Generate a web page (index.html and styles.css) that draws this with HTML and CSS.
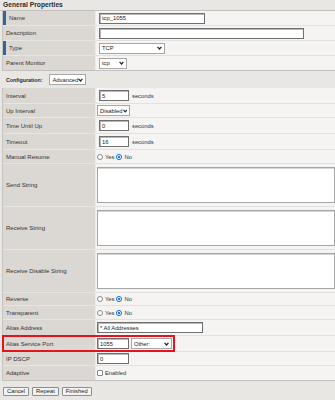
FILE: index.html
```html
<!DOCTYPE html>
<html lang="en">
<head>
    <meta charset="UTF-8">
    <meta name="viewport" content="width=device-width, initial-scale=1.0">
    <title>Monitor Properties</title>
    <link rel="stylesheet" href="styles.css">
</head>
<body>
    <div class="section-title">General Properties</div>

    <div class="props props-general">
        <div class="row">
            <div class="label required">Name</div>
            <div class="value"><input type="text" class="field w-name" value="tcp_1055"></div>
        </div>
        <div class="row">
            <div class="label">Description</div>
            <div class="value"><input type="text" class="field w-desc" value=""></div>
        </div>
        <div class="row">
            <div class="label required">Type</div>
            <div class="value">
                <span class="select w-type">TCP
                    <svg width="5" height="4" viewBox="0 0 5 4"><path d="M0.6 0.8 L2.5 3 L4.4 0.8" fill="none" stroke="#222" stroke-width="1.2"/></svg>
                </span>
            </div>
        </div>
        <div class="row">
            <div class="label">Parent Monitor</div>
            <div class="value">
                <span class="select w-parent">tcp
                    <svg width="5" height="4" viewBox="0 0 5 4"><path d="M0.6 0.8 L2.5 3 L4.4 0.8" fill="none" stroke="#222" stroke-width="1.2"/></svg>
                </span>
            </div>
        </div>
    </div>

    <div class="config-head">
        <span class="config-title">Configuration:</span>
        <span class="select w-adv">Advanced
            <svg width="5" height="4" viewBox="0 0 5 4"><path d="M0.6 0.8 L2.5 3 L4.4 0.8" fill="none" stroke="#222" stroke-width="1.2"/></svg>
        </span>
    </div>

    <div class="props props-config">
        <div class="row in">
            <div class="label">Interval</div>
            <div class="value"><input type="text" class="field w-num" value="5"><span class="unit">seconds</span></div>
        </div>
        <div class="row">
            <div class="label">Up Interval</div>
            <div class="value flush">
                <span class="select w-disabled">Disabled
                    <svg width="5" height="4" viewBox="0 0 5 4"><path d="M0.6 0.8 L2.5 3 L4.4 0.8" fill="none" stroke="#222" stroke-width="1.2"/></svg>
                </span>
            </div>
        </div>
        <div class="row in">
            <div class="label">Time Until Up</div>
            <div class="value"><input type="text" class="field w-num" value="0"><span class="unit">seconds</span></div>
        </div>
        <div class="row in">
            <div class="label">Timeout</div>
            <div class="value"><input type="text" class="field w-num" value="16"><span class="unit">seconds</span></div>
        </div>
        <div class="row">
            <div class="label">Manual Resume</div>
            <div class="value flush">
                <span class="radio"></span><span class="opt">Yes</span>
                <span class="radio on"></span><span class="opt">No</span>
            </div>
        </div>
        <div class="row tall">
            <div class="label">Send String</div>
            <div class="value"><textarea class="area"></textarea></div>
        </div>
        <div class="row tall">
            <div class="label">Receive String</div>
            <div class="value"><textarea class="area"></textarea></div>
        </div>
        <div class="row tall">
            <div class="label">Receive Disable String</div>
            <div class="value"><textarea class="area"></textarea></div>
        </div>
        <div class="row short">
            <div class="label">Reverse</div>
            <div class="value flush">
                <span class="radio"></span><span class="opt">Yes</span>
                <span class="radio on"></span><span class="opt">No</span>
            </div>
        </div>
        <div class="row">
            <div class="label">Transparent</div>
            <div class="value flush">
                <span class="radio"></span><span class="opt">Yes</span>
                <span class="radio on"></span><span class="opt">No</span>
            </div>
        </div>
        <div class="row in">
            <div class="label">Alias Address</div>
            <div class="value flush"><input type="text" class="field w-name" value="* All Addresses"></div>
        </div>
        <div class="row in marked">
            <div class="label">Alias Service Port</div>
            <div class="value flush">
                <input type="text" class="field w-port" value="1055">
                <span class="select w-other">Other:
                    <svg width="5" height="4" viewBox="0 0 5 4"><path d="M0.6 0.8 L2.5 3 L4.4 0.8" fill="none" stroke="#222" stroke-width="1.2"/></svg>
                </span>
            </div>
            <div class="highlight"></div>
        </div>
        <div class="row">
            <div class="label">IP DSCP</div>
            <div class="value flush"><input type="text" class="field w-port" value="0"></div>
        </div>
        <div class="row">
            <div class="label">Adaptive</div>
            <div class="value flush"><span class="check"></span><span class="opt">Enabled</span></div>
        </div>
    </div>

    <div class="actions">
        <button class="btn">Cancel</button>
        <button class="btn">Repeat</button>
        <button class="btn">Finished</button>
    </div>
</body>
</html>
```

FILE: styles.css
```css
* {
    box-sizing: border-box;
}
body {
    margin: 0;
    width: 335px;
    height: 400px;
    overflow: hidden;
    background-color: #e9e7e4;
    font-family: "Liberation Sans", Arial, sans-serif;
    font-size: 6px;
    color: #333;
}
.section-title {
    height: 11px;
    line-height: 10px;
    padding-left: 3px;
    font-size: 6.7px;
    font-weight: bold;
    color: #2b2b2b;
    border-bottom: 1px solid #c3c1be;
}
.props {
    margin-left: 2px;
    border-left: 1px solid #c6c4c1;
    border-bottom: 1px solid #c3c1be;
}
.row {
    position: relative;
    display: grid;
    grid-template-columns: 92px 1fr;
    height: 14px;
}
.props-general .row {
    height: 15px;
}
.props-general .row:last-child {
    height: 14px;
}
.row.in {
    height: 16px;
}
.row.short {
    height: 13px;
}
.row.tall {
    height: 43px;
}
.label {
    display: flex;
    align-items: center;
    padding-left: 3px;
    background-color: #dbd8d4;
    border-bottom: 1px solid #e7e5e2;
    white-space: nowrap;
}
.label.required {
    padding-left: 6px;
    box-shadow: inset 3px 0 0 #34649a;
}
.value {
    display: flex;
    align-items: center;
    padding-left: 3px;
    background-color: #f5f4f2;
    border-left: 1px solid #edebe8;
    border-bottom: 1px solid #e3e1de;
    white-space: nowrap;
    overflow: hidden;
}
.row:last-child .label,
.row:last-child .value {
    border-bottom: 0;
}
.value.flush {
    padding-left: 1px;
}
.row.tall .value {
    align-items: flex-start;
    padding: 3px 0 0 1px;
}
.field {
    height: 11px;
    padding: 0 2px;
    font-family: inherit;
    font-size: 5.8px;
    color: #222;
    background-color: #fff;
    border: 1px solid #6f6f6f;
    box-shadow: inset 1px 1px 0 #b8b8b8;
    outline: none;
}
.w-name { width: 106px; }
.w-desc { width: 205px; }
.w-num { width: 30px; }
.w-port { width: 32px; }
.unit {
    margin-left: 3px;
    font-size: 5.8px;
}
.select {
    display: inline-flex;
    align-items: center;
    justify-content: space-between;
    height: 11px;
    padding: 0 2px;
    font-size: 5.8px;
    color: #222;
    background-color: #fff;
    border: 1px solid #a7a7a7;
}
.w-type { width: 66px; }
.w-parent { width: 28px; }
.w-adv { width: 37px; }
.w-disabled { width: 33px; }
.w-other { width: 41px; margin-left: 2px; }
.config-head {
    display: flex;
    align-items: center;
    gap: 7px;
    height: 17px;
    padding-left: 6px;
}
.config-title {
    font-size: 5.3px;
    font-weight: bold;
    color: #2b2b2b;
}
.radio {
    width: 6px;
    height: 6px;
    border-radius: 50%;
    border: 1px solid #8a8a8a;
    background-color: #fff;
}
.radio.on {
    border-color: #1f6fdc;
    background: radial-gradient(circle, #2b7be6 1.3px, #fff 1.6px);
    box-shadow: inset 0 0 0 0.8px #fff;
    background-color: #2b7be6;
}
.opt {
    margin: 0 2px 0 2px;
    font-size: 5.8px;
}
.check {
    width: 6px;
    height: 6px;
    border: 1px solid #8a8a8a;
    border-radius: 1px;
    background-color: #fff;
}
.area {
    display: block;
    width: 260px;
    height: 36px;
    resize: none;
    background-color: #fff;
    border: 1px solid #a6a6a6;
    box-shadow: inset 0 1px 0 #d4d4d4;
}
.highlight {
    position: absolute;
    left: -1px;
    top: -1px;
    width: 173px;
    height: 17px;
    border: 2px solid #e3141d;
}
.actions {
    display: flex;
    gap: 3px;
    padding: 6px 0 0 3px;
}
.btn {
    height: 9px;
    padding: 0 3px;
    font-family: inherit;
    font-size: 5.8px;
    line-height: 7px;
    color: #222;
    background-color: #f3f3f3;
    border: 1px solid #8d8d8d;
    border-radius: 1px;
}
```
